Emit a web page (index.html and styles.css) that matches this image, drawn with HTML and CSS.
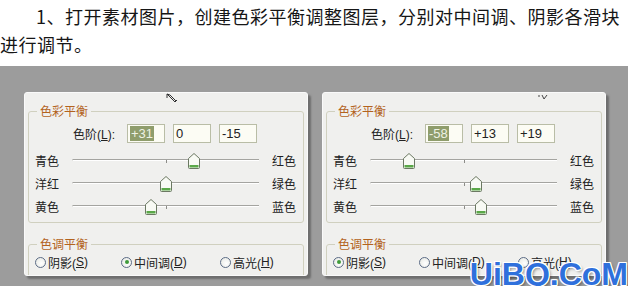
FILE: index.html
```html
<!DOCTYPE html>
<html lang="zh-CN">
<head>
    <meta charset="UTF-8">
    <meta name="viewport" content="width=device-width, initial-scale=1.0">
    <title>色彩平衡调整</title>
    <link rel="stylesheet" href="styles.css">
</head>
<body>
    <p class="intro">1、打开素材图片，创建色彩平衡调整图层，分别对中间调、阴影各滑块进行调节。</p>

    <main class="shots">
        <!-- 中间调 -->
        <div class="dialog">
            <svg class="cursor cursor-left" width="12" height="11" viewBox="0 0 12 11">
                <path d="M1 1 L1 5 M1 1 L4 2 M1 1 L9 9 M4 2 L10 8 M9 9 L11 7" fill="none" stroke="#333" stroke-width="1"/>
            </svg>
            <fieldset class="group">
                <legend>色彩平衡</legend>
                <div class="levels">
                    <span class="levels-label">色阶(<u>L</u>):</span>
                    <span class="field"><span class="selected">+31</span></span>
                    <span class="field">0</span>
                    <span class="field">-15</span>
                </div>
                <div class="slider-row">
                    <span class="side">青色</span>
                    <div class="track">
                        <svg class="thumb" style="left: calc(65.5% - 6px)" width="12" height="16" viewBox="0 0 12 16"><path d="M0.5 5.5 L6 0.5 L11.5 5.5 V14.5 Q11.5 15.5 10.5 15.5 H1.5 Q0.5 15.5 0.5 14.5 Z" fill="#f8faf4" stroke="#6b7862"/><path d="M1.5 12 H10.5 V14.5 H1.5 Z" fill="#5aa848"/></svg>
                    </div>
                    <span class="side">红色</span>
                </div>
                <div class="slider-row">
                    <span class="side">洋红</span>
                    <div class="track">
                        <svg class="thumb" style="left: calc(50% - 6px)" width="12" height="16" viewBox="0 0 12 16"><path d="M0.5 5.5 L6 0.5 L11.5 5.5 V14.5 Q11.5 15.5 10.5 15.5 H1.5 Q0.5 15.5 0.5 14.5 Z" fill="#f8faf4" stroke="#6b7862"/><path d="M1.5 12 H10.5 V14.5 H1.5 Z" fill="#5aa848"/></svg>
                    </div>
                    <span class="side">绿色</span>
                </div>
                <div class="slider-row">
                    <span class="side">黄色</span>
                    <div class="track">
                        <svg class="thumb" style="left: calc(42.5% - 6px)" width="12" height="16" viewBox="0 0 12 16"><path d="M0.5 5.5 L6 0.5 L11.5 5.5 V14.5 Q11.5 15.5 10.5 15.5 H1.5 Q0.5 15.5 0.5 14.5 Z" fill="#f8faf4" stroke="#6b7862"/><path d="M1.5 12 H10.5 V14.5 H1.5 Z" fill="#5aa848"/></svg>
                    </div>
                    <span class="side">蓝色</span>
                </div>
            </fieldset>

            <fieldset class="group tone">
                <legend>色调平衡</legend>
                <div class="radios">
                    <label class="radio"><span class="dot"></span>阴影(<u>S</u>)</label>
                    <label class="radio"><span class="dot checked"></span>中间调(<u>D</u>)</label>
                    <label class="radio"><span class="dot"></span>高光(<u>H</u>)</label>
                </div>
            </fieldset>
        </div>

        <!-- 阴影 -->
        <div class="dialog">
            <svg class="cursor cursor-right" width="10" height="6" viewBox="0 0 10 6">
                <path d="M1 1 L1 3 M4 1 L6 5 L9 1" fill="none" stroke="#444" stroke-width="1"/>
            </svg>
            <fieldset class="group">
                <legend>色彩平衡</legend>
                <div class="levels">
                    <span class="levels-label">色阶(<u>L</u>):</span>
                    <span class="field"><span class="selected">-58</span></span>
                    <span class="field">+13</span>
                    <span class="field">+19</span>
                </div>
                <div class="slider-row">
                    <span class="side">青色</span>
                    <div class="track">
                        <svg class="thumb" style="left: calc(21% - 6px)" width="12" height="16" viewBox="0 0 12 16"><path d="M0.5 5.5 L6 0.5 L11.5 5.5 V14.5 Q11.5 15.5 10.5 15.5 H1.5 Q0.5 15.5 0.5 14.5 Z" fill="#f8faf4" stroke="#6b7862"/><path d="M1.5 12 H10.5 V14.5 H1.5 Z" fill="#5aa848"/></svg>
                    </div>
                    <span class="side">红色</span>
                </div>
                <div class="slider-row">
                    <span class="side">洋红</span>
                    <div class="track">
                        <svg class="thumb" style="left: calc(56.5% - 6px)" width="12" height="16" viewBox="0 0 12 16"><path d="M0.5 5.5 L6 0.5 L11.5 5.5 V14.5 Q11.5 15.5 10.5 15.5 H1.5 Q0.5 15.5 0.5 14.5 Z" fill="#f8faf4" stroke="#6b7862"/><path d="M1.5 12 H10.5 V14.5 H1.5 Z" fill="#5aa848"/></svg>
                    </div>
                    <span class="side">绿色</span>
                </div>
                <div class="slider-row">
                    <span class="side">黄色</span>
                    <div class="track">
                        <svg class="thumb" style="left: calc(59.5% - 6px)" width="12" height="16" viewBox="0 0 12 16"><path d="M0.5 5.5 L6 0.5 L11.5 5.5 V14.5 Q11.5 15.5 10.5 15.5 H1.5 Q0.5 15.5 0.5 14.5 Z" fill="#f8faf4" stroke="#6b7862"/><path d="M1.5 12 H10.5 V14.5 H1.5 Z" fill="#5aa848"/></svg>
                    </div>
                    <span class="side">蓝色</span>
                </div>
            </fieldset>

            <fieldset class="group tone">
                <legend>色调平衡</legend>
                <div class="radios">
                    <label class="radio"><span class="dot checked"></span>阴影(<u>S</u>)</label>
                    <label class="radio"><span class="dot"></span>中间调(<u>D</u>)</label>
                    <label class="radio"><span class="dot"></span>高光(<u>H</u>)</label>
                </div>
            </fieldset>
        </div>

        <div class="watermark">UiBQ.CoM</div>
    </main>
</body>
</html>
```

FILE: styles.css
```css
body {
    margin: 0;
    background: #fff;
    overflow: hidden;
    font-family: "Liberation Sans", "Noto Sans CJK SC", sans-serif;
    color: #222;
}
.intro {
    margin: 0;
    height: 66px;
    box-sizing: border-box;
    padding-top: 2px;
    font-family: "Noto Sans CJK SC", sans-serif;
    font-size: 18px;
    line-height: 28px;
    letter-spacing: 0.5px;
    text-indent: 2em;
    color: #161616;
}
.shots {
    position: relative;
    display: flex;
    gap: 14px;
    height: 220px;
    box-sizing: border-box;
    padding: 26px 0 0 24px;
    background: #9c9c9c;
    overflow: hidden;
}
.dialog {
    position: relative;
    width: 284px;
    height: 184px;
    box-sizing: border-box;
    padding: 11px 3px 0 3px;
    background: #f0f0ee;
    border: 1px solid #fafafa;
    border-radius: 3px;
    box-shadow: 3px 3px 2px #6e6e6e;
    overflow: hidden;
    font-size: 12px;
}
.cursor {
    position: absolute;
    top: 0;
}
.cursor-left {
    left: 141px;
}
.cursor-right {
    left: 215px;
    top: 1px;
}
.group {
    margin: 0;
    padding: 0 0 4px;
    min-width: 0;
    border: 1px solid #d0d0bf;
    border-radius: 3px;
}
.group legend {
    margin-left: 8px;
    padding: 0 3px;
    font-family: "Noto Sans CJK SC", sans-serif;
    font-size: 12px;
    line-height: 14px;
    color: #b3631d;
}
.levels {
    display: flex;
    align-items: center;
    margin-top: 6px;
    padding-left: 44px;
    height: 19px;
}
.levels-label {
    width: 54px;
    white-space: nowrap;
}
.field {
    width: 38px;
    height: 19px;
    box-sizing: border-box;
    margin-right: 8px;
    padding: 1px 0 0 2px;
    border: 1px solid #b9bda6;
    background: #fcfcf4;
    font-size: 13px;
    line-height: 15px;
}
.selected {
    display: inline-block;
    padding: 0 1px;
    background: #8f9d6c;
    color: #eef2e4;
}
.slider-row {
    display: flex;
    align-items: center;
    height: 23px;
    padding: 0 7px 0 6px;
}
.levels + .slider-row {
    margin-top: 6px;
}
.side {
    width: 24px;
    font-family: "Noto Sans CJK SC", sans-serif;
    white-space: nowrap;
}
.track {
    position: relative;
    flex: 1;
    height: 16px;
    margin: 0 13px;
}
.track::before {
    content: "";
    position: absolute;
    left: 0;
    right: 0;
    top: 6px;
    height: 1px;
    background: #a4a4a0;
    border-bottom: 1px solid #fff;
    border-left: 1px solid #c4c4c0;
    border-radius: 2px 0 0 2px;
}
.track::after {
    content: "";
    position: absolute;
    left: 50%;
    top: 7px;
    width: 1px;
    height: 3px;
    background: #8c8c88;
}
.thumb {
    position: absolute;
    top: 0;
    z-index: 1;
}
.tone {
    margin-top: 14px;
    padding-bottom: 10px;
}
.radios {
    display: flex;
    align-items: center;
    height: 20px;
    margin-top: 1px;
    padding-left: 6px;
}
.radio {
    display: flex;
    align-items: center;
    white-space: nowrap;
}
.radio:nth-child(1) {
    width: 86px;
}
.radio:nth-child(2) {
    width: 99px;
}
.dot {
    position: relative;
    width: 11px;
    height: 11px;
    box-sizing: border-box;
    margin-right: 2px;
    border: 1px solid #5c6c86;
    border-radius: 50%;
    background: radial-gradient(circle at 60% 60%, #fff, #e4e6e0);
}
.dot.checked::after {
    content: "";
    position: absolute;
    left: 2.5px;
    top: 2.5px;
    width: 4px;
    height: 4px;
    border-radius: 50%;
    background: #3f9b3a;
}
.watermark {
    position: absolute;
    right: 0;
    bottom: -4px;
    font-family: "Liberation Sans", sans-serif;
    font-size: 32px;
    font-weight: bold;
    line-height: 1;
    color: #2f70dc;
    text-shadow: 1px 0 #fff, -1px 0 #fff, 0 1px #fff, 0 -1px #fff,
        1px 1px #fff, -1px -1px #fff, 1px -1px #fff, -1px 1px #fff,
        2px 2px 3px rgba(0, 0, 0, 0.4);
}
```
